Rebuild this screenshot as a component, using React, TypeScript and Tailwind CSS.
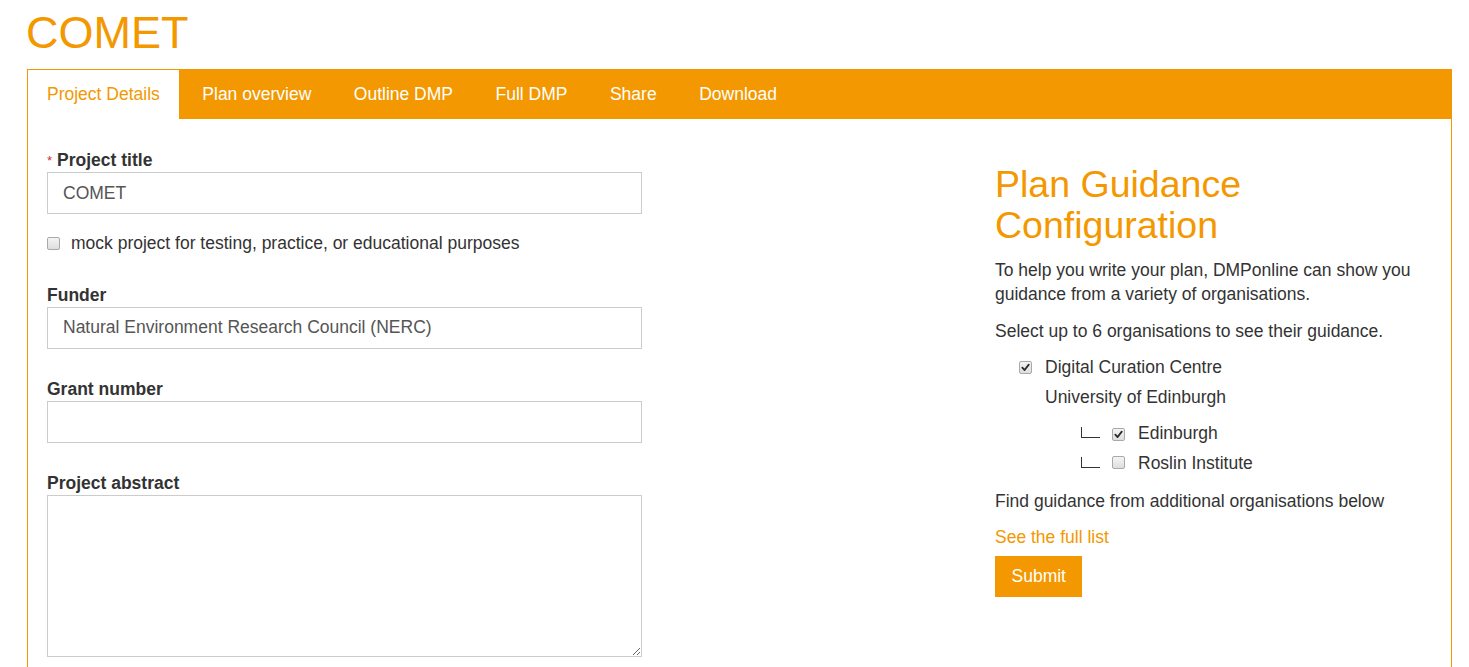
import React from 'react'

const ORANGE = 'text-[#f39800]'

const tabs = ['Project Details', 'Plan overview', 'Outline DMP', 'Full DMP', 'Share', 'Download']

const Check: React.FC<{ checked?: boolean }> = ({ checked }) => (
  <span className="inline-flex h-[13px] w-[13px] shrink-0 items-center justify-center rounded-[2px] border border-[#a9a9a9] bg-gradient-to-b from-[#f4f4f4] to-[#dedede]">
    {checked && (
      <svg viewBox="0 0 10 10" className="h-[9px] w-[9px]">
        <path d="M1.5 5.2 L4 7.8 L8.6 1.8" fill="none" stroke="#2b2b2b" strokeWidth="2" strokeLinecap="round" strokeLinejoin="round" />
      </svg>
    )}
  </span>
)

const Tree: React.FC = () => (
  <span className="mb-[8px] inline-block h-[11px] w-[19px] shrink-0 self-end border-b border-l border-[#333]" />
)

const Field: React.FC<{ label: string; value?: string; required?: boolean }> = ({ label, value, required }) => (
  <div>
    <label className="block pt-[2px] font-bold leading-[23px] text-[#333]">
      {required && <span className="mr-[5px] align-top text-[13px] font-normal text-[#d0312d]">*</span>}
      {label}
    </label>
    <input
      readOnly
      value={value ?? ''}
      className="block h-[42px] w-full border border-[#cccccc] px-[15px] text-[17.5px] text-[#555] outline-none"
    />
  </div>
)

export default function App() {
  return (
    <div className="min-h-screen bg-white pl-[27px] pt-[8px] font-['Liberation_Sans',Arial,sans-serif] text-[17.5px] text-[#333]">
      <h1 className={`text-[45px] leading-[49.5px] ${ORANGE} mb-[11.5px] -ml-[1px]`}>COMET</h1>

      <div className="w-[1425px] border border-[#f39800]">
        {/* Tabs */}
        <div className="flex h-[49px] bg-[#f39800]">
          {tabs.map((t, i) => (
            <div
              key={t}
              className={
                i === 0
                  ? 'mr-[4.5px] flex items-center bg-white px-[19px] text-[#f39800]'
                  : 'mr-[4.5px] flex items-center px-[19px] text-white'
              }
            >
              {t}
            </div>
          ))}
        </div>

        <div className="flex px-[19px] pb-[60px] pt-[28px]">
          {/* Left column */}
          <div className="w-[595px]">
            <Field label="Project title" value="COMET" required />
            <div className="mt-[16.5px] flex items-center leading-[25px]">
              <Check />
              <span className="ml-[11px]">mock project for testing, practice, or educational purposes</span>
            </div>

            <div className="mt-[26px]">
              <Field label="Funder" value="Natural Environment Research Council (NERC)" />
            </div>
            <div className="mt-[27px]">
              <Field label="Grant number" />
            </div>
            <div className="mt-[27px]">
              <label className="block pt-[2px] font-bold leading-[23px]">Project abstract</label>
              <textarea readOnly className="block h-[162px] w-full border border-[#cccccc] px-[15px] outline-none" />
            </div>
          </div>

          {/* Right column */}
          <div className="ml-auto w-[437px] pt-[17px]">
            <h2 className={`text-[37.5px] leading-[41.25px] ${ORANGE} mb-[11px]`}>
              Plan Guidance
              <br />
              Configuration
            </h2>
            <p className="mb-[12px] leading-[24.5px]">
              To help you write your plan, DMPonline can show you guidance from a variety of organisations.
            </p>
            <p className="mb-[11px] leading-[25px]">Select up to 6 organisations to see their guidance.</p>

            <div className="ml-[24px] flex h-[25px] items-center">
              <Check checked />
              <span className="ml-[13px]">Digital Curation Centre</span>
            </div>
            <div className="ml-[50px] mt-[5.5px] leading-[25px]">University of Edinburgh</div>
            <div className="ml-[86px] mt-[11px] flex h-[25px] items-center">
              <Tree />
              <span className="ml-[12px]">
                <Check checked />
              </span>
              <span className="ml-[13px]">Edinburgh</span>
            </div>
            <div className="ml-[86px] mt-[5px] flex h-[25px] items-center">
              <Tree />
              <span className="ml-[12px]">
                <Check />
              </span>
              <span className="ml-[13px]">Roslin Institute</span>
            </div>

            <p className="mt-[12.5px] leading-[25px]">Find guidance from additional organisations below</p>
            <a href="#" className={`mt-[11px] block leading-[25px] ${ORANGE}`}>
              See the full list
            </a>
            <button className="mt-[6.5px] h-[41px] bg-[#f39800] px-[16.5px] text-white">Submit</button>
          </div>
        </div>
      </div>
    </div>
  )
}
